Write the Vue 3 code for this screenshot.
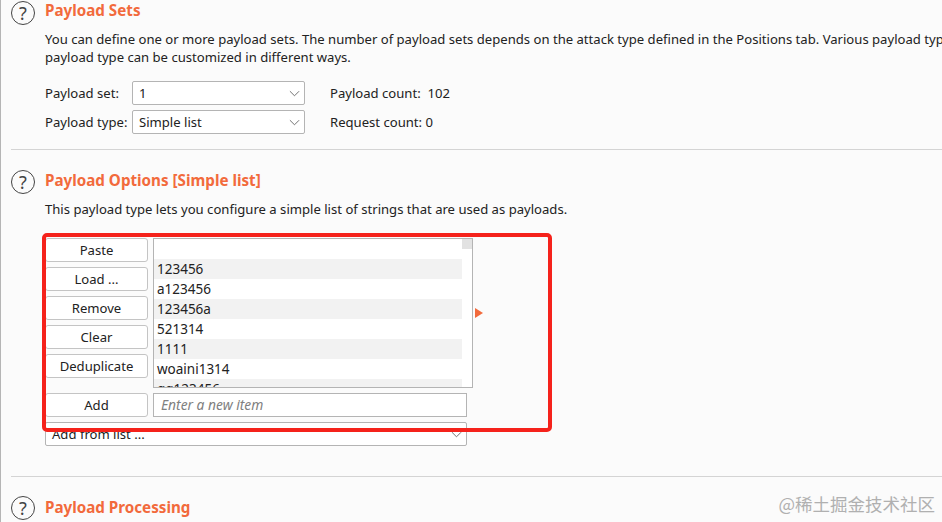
<template>
  <div class="page">
    <section class="section first">
      <div class="head">
        <span class="help">?</span>
        <h2>Payload Sets</h2>
      </div>
      <div class="body">
        <p class="desc">
          You can define one or more payload sets. The number of payload sets depends on the attack type defined in the Positions tab. Various payload types are available for each payload set, and each<br />payload type can be customized in different ways.
        </p>
        <div class="set-grid">
          <label>Payload set:</label>
          <div class="select"><span>1</span><svg class="chev" viewBox="0 0 12 7"><path d="M1 1l5 5 5-5" /></svg></div>
          <span class="count">Payload count:&nbsp; 102</span>
          <label>Payload type:</label>
          <div class="select"><span>Simple list</span><svg class="chev" viewBox="0 0 12 7"><path d="M1 1l5 5 5-5" /></svg></div>
          <span class="count">Request count:&nbsp;0</span>
        </div>
      </div>
    </section>

    <section class="section second">
      <div class="head">
        <span class="help">?</span>
        <h2>Payload Options [Simple list]</h2>
      </div>
      <div class="body">
        <p class="desc">This payload type lets you configure a simple list of strings that are used as payloads.</p>
        <div class="editor">
          <div class="buttons">
            <button v-for="b in buttons" :key="b">{{ b }}</button>
          </div>
          <div class="list">
            <div class="rows">
              <div v-for="(item, i) in items" :key="i" class="row" :class="{ odd: i % 2 === 0 }">{{ item }}</div>
            </div>
            <div class="scroll"><i></i></div>
          </div>
          <span class="arrow"></span>
        </div>
        <div class="add-row">
          <button>Add</button>
          <div class="input">Enter a new item</div>
        </div>
        <div class="select wide"><span>Add from list ...</span><svg class="chev" viewBox="0 0 12 7"><path d="M1 1l5 5 5-5" /></svg></div>
      </div>
    </section>

    <section class="section third">
      <div class="head">
        <span class="help">?</span>
        <h2>Payload Processing</h2>
      </div>
    </section>

    <div class="red-box"></div>
    <div class="watermark">@稀土掘金技术社区</div>
  </div>
</template>

<script setup>
const buttons = ['Paste', 'Load ...', 'Remove', 'Clear', 'Deduplicate']
const items = ['123456', 'a123456', '123456a', '521314', '1111', 'woaini1314', 'qq123456']
</script>

<style>
html, body { margin: 0; overflow: hidden; }
</style>

<style scoped>
.page {
  position: relative;
  width: 942px;
  height: 522px;
  overflow: hidden;
  box-sizing: border-box;
  background: #fbfbfb;
  color: #222;
  font-family: "Noto Sans", "Noto Sans CJK SC", sans-serif;
  font-size: 13.1px;
  line-height: 20px;
}
.page::before {
  content: "";
  position: absolute;
  left: 0; top: 0; bottom: 0;
  width: 1px;
  background: #b5b5b5;
}
.section { margin-left: 11px; }
.first { height: 148px; padding-top: 1px; border-bottom: 1px solid #d4d4d4; }
.second { height: 306px; padding-top: 20px; border-bottom: 1px solid #d4d4d4; }
.third { padding-top: 19px; }

.head { display: flex; align-items: center; gap: 10px; height: 24px; }
.help {
  box-sizing: border-box;
  width: 24px;
  height: 24px;
  flex: none;
  border: 1.5px solid #444;
  border-radius: 50%;
  display: flex;
  align-items: center;
  justify-content: center;
  font-size: 18px;
  color: #444;
}
h2 {
  margin: 0;
  position: relative;
  top: -3px;
  font-size: 15.2px;
  font-weight: 700;
  color: #f26a3c;
}
.second h2 { top: -2px; }
.third h2 { top: -1px; }
.body { padding-left: 34px; }
.desc { margin: 5px 0 0; line-height: 18px; white-space: nowrap; }
.second .desc { margin-top: 6px; }

.set-grid {
  display: grid;
  grid-template-columns: 87px 173px auto;
  grid-auto-rows: 24px;
  row-gap: 5px;
  margin-top: 15px;
  align-items: center;
  width: 500px;
}
.select {
  box-sizing: border-box;
  height: 24px;
  padding: 0 4px 0 6px;
  border: 1px solid #b4b4b4;
  border-radius: 2px;
  background: #fff;
  display: flex;
  align-items: center;
  justify-content: space-between;
}
.chev { width: 11px; height: 7px; fill: none; stroke: #666; stroke-width: 1; }
.count { margin-left: 25px; white-space: nowrap; }

.editor { display: flex; gap: 5px; margin-top: 20px; position: relative; }
.buttons { display: flex; flex-direction: column; gap: 5px; width: 103px; }
button {
  box-sizing: border-box;
  width: 103px;
  height: 24px;
  padding: 0;
  border: 1px solid #c4c4c4;
  border-radius: 3px;
  background: #fff;
  color: #222;
  font: inherit;
}
.list {
  box-sizing: border-box;
  width: 320px;
  height: 150px;
  border: 1px solid #b4b4b4;
  background: #fff;
  display: flex;
  overflow: hidden;
  font-size: 13.5px;
}
.rows { flex: 1; padding-top: 20px; min-width: 0; }
.row { height: 20px; padding-left: 3px; }
.row.odd { background: #f2f2f2; }
.scroll { width: 10px; flex: none; }
.scroll i { display: block; height: 10px; background: #e2e2e2; }
.arrow {
  position: absolute;
  left: 430px;
  top: 70px;
  border-left: 8px solid #f26a3c;
  border-top: 5px solid transparent;
  border-bottom: 5px solid transparent;
}

.add-row { display: flex; gap: 5px; margin-top: 5px; }
.input {
  box-sizing: border-box;
  width: 314px;
  height: 24px;
  padding: 0 7px;
  border: 1px solid #b4b4b4;
  background: #fff;
  color: #808080;
  font-style: italic;
  font-size: 13.8px;
  display: flex;
  align-items: center;
}
.wide { width: 422px; margin-top: 5px; }

.red-box {
  position: absolute;
  left: 42px;
  top: 233px;
  width: 510px;
  height: 199px;
  box-sizing: border-box;
  border: 4px solid #f5221b;
  border-radius: 5px;
  pointer-events: none;
}
.watermark {
  position: absolute;
  right: 7px;
  top: 494px;
  font-size: 17.5px;
  color: #b0b0b0;
  font-family: "Noto Sans CJK SC", sans-serif;
}
</style>
